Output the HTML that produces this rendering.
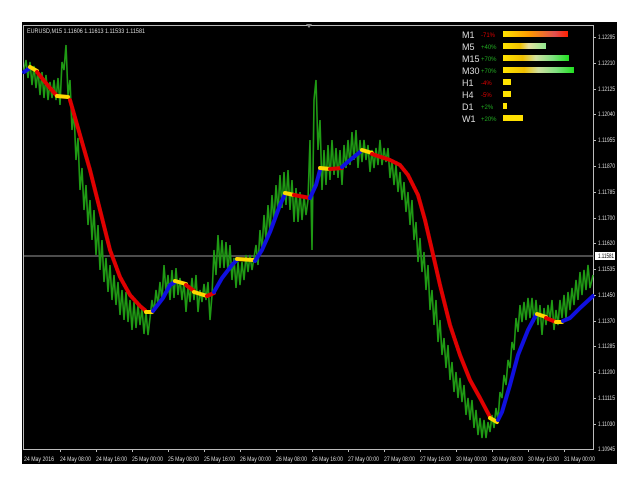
<!DOCTYPE html>
<html><head><meta charset="utf-8"><style>
html,body{margin:0;padding:0;background:#fff;width:640px;height:495px;overflow:hidden}
svg{position:absolute;left:0;top:0}
text{font-family:"Liberation Sans",sans-serif}
</style></head><body>
<svg width="640" height="495" viewBox="0 0 640 495">
<rect x="0" y="0" width="640" height="495" fill="#fff"/>
<rect x="22" y="22" width="595" height="442" fill="#000"/>
<rect x="23.5" y="25.5" width="570" height="424" fill="none" stroke="#bbb" stroke-width="1"/>
<polygon points="306,24 312,24 309,28" fill="#888"/>
<line x1="24" y1="256" x2="594" y2="256" stroke="#999" stroke-width="1"/>
<text x="27" y="33" fill="#ddd" font-size="6" textLength="118" lengthAdjust="spacingAndGlyphs">EURUSD,M15  1.11606 1.11613 1.11533 1.11581</text>
<!-- green price -->
<polyline fill="none" stroke="#1f9a14" stroke-width="1.6" stroke-linejoin="bevel" points="24,70 26,60 28,78 30,62 32,85 34,66 36,88 38,70 40,95 42,72 44,98 46,75 48,100 50,82 52,98 54,80 56,100 58,78 60,105 62,62 64,70 66,45 68,95 70,80 72,130 74,112 76,160 78,138 80,190 82,168 84,210 86,185 88,225 90,200 92,240 94,210 96,255 98,225 100,270 102,240 104,282 106,258 108,292 110,265 112,300 114,275 116,305 118,282 120,315 122,290 124,320 126,292 128,322 130,300 132,330 134,302 136,328 138,305 140,325 142,308 144,334 146,312 148,335 150,318 152,300 154,312 156,290 158,305 160,282 162,300 164,265 166,292 168,275 170,300 172,270 174,298 176,268 178,295 180,278 182,300 184,282 186,312 188,286 190,302 192,278 194,300 196,275 198,312 200,290 202,302 204,284 206,300 208,282 210,320 212,295 214,250 216,275 218,235 220,268 222,240 224,268 226,242 228,272 230,245 232,280 234,258 236,288 238,262 240,285 242,262 244,280 246,255 248,272 250,255 252,270 254,258 256,245 258,265 260,230 262,250 264,215 266,240 268,205 270,232 272,195 274,222 276,185 278,212 280,175 282,208 284,172 286,205 288,170 290,210 292,180 294,222 296,188 298,222 300,192 302,220 304,196 306,215 308,200 310,140 312,250 314,100 316,80 318,150 320,120 322,190 324,150 326,185 328,145 330,180 332,140 334,175 336,148 338,178 340,150 342,185 344,145 346,168 348,140 350,165 352,132 354,160 356,130 358,168 360,140 362,162 364,140 366,160 368,145 370,172 372,150 374,168 376,148 378,165 380,140 382,165 384,148 386,162 388,148 390,178 392,160 394,185 396,165 398,192 400,172 402,200 404,182 406,212 408,192 410,225 412,200 414,240 416,222 418,262 420,238 422,272 424,252 426,290 428,265 430,310 432,290 434,325 436,300 438,342 440,320 442,355 444,338 446,368 448,345 450,380 452,362 454,392 456,372 458,398 460,378 462,402 464,385 466,415 468,398 470,420 472,400 474,428 476,410 478,435 480,418 482,438 484,420 486,438 488,422 490,432 492,415 494,428 496,408 498,420 500,392 502,398 504,375 506,385 508,360 510,368 512,342 514,350 516,318 518,332 520,305 522,322 524,302 526,320 528,298 530,318 532,298 534,322 536,300 538,325 540,305 542,335 544,308 546,325 548,305 550,320 552,300 554,330 556,310 558,325 560,300 562,318 564,295 566,318 568,292 570,310 572,288 574,305 576,280 578,300 580,272 582,295 584,270 586,290 588,265 590,288 593,275"/>
<!-- MA segments -->
<g fill="none" stroke-width="4" stroke-linecap="round" stroke-linejoin="round">
<polyline stroke="#1010e0" points="24,72 30,68"/>
<polyline stroke="#ffd800" points="30,67 37,71"/>
<polyline stroke="#e00000" points="37,72 50,88 57,96"/>
<polyline stroke="#ffd800" points="57,96 68,97"/>
<polyline stroke="#e00000" stroke-dasharray="2 1.5" points="70,100 80,135 90,170 100,210 110,250 120,277 130,295 140,306 146,311"/>
<polyline stroke="#ffd800" points="146,312 152,312"/>
<polyline stroke="#1010e0" points="153,311 163,298 170,285 175,282"/>
<polyline stroke="#ffd800" points="175,281 186,284"/>
<polyline stroke="#e00000" points="186,285 194,291"/>
<polyline stroke="#ffd800" points="194,292 207,296"/>
<polyline stroke="#e00000" points="207,296 214,293"/>
<polyline stroke="#1010e0" points="214,292 222,278 232,265 237,260"/>
<polyline stroke="#ffd800" points="237,259 253,260"/>
<polyline stroke="#1010e0" points="255,261 262,250 270,232 280,205 285,194"/>
<polyline stroke="#ffd800" points="285,193 294,195"/>
<polyline stroke="#e00000" points="294,195 310,198"/>
<polyline stroke="#1010e0" points="310,198 316,185 320,170"/>
<polyline stroke="#ffd800" points="320,168 330,169"/>
<polyline stroke="#e00000" points="330,169 342,168"/>
<polyline stroke="#1010e0" points="342,167 350,160 360,152"/>
<polyline stroke="#ffd800" points="362,150 372,153"/>
<polyline stroke="#e00000" points="372,154 390,160"/>
<polyline stroke="#e00000" stroke-dasharray="2 1.5" points="392,161 400,165 408,175 418,195 425,220 432,250 440,285 450,325 460,355"/>
<polyline stroke="#e00000" points="460,355 470,380 480,398 490,417"/>
<polyline stroke="#ffd800" points="490,418 497,422"/>
<polyline stroke="#1010e0" points="498,420 502,412 510,385 518,355 528,330 536,315"/>
<polyline stroke="#ffd800" points="537,314 546,317"/>
<polyline stroke="#e00000" points="546,318 556,322"/>
<polyline stroke="#ffd800" points="556,322 562,322"/>
<polyline stroke="#1010e0" points="563,321 570,318 580,308 593,296"/>
</g>
<!-- panel -->
<g font-size="9" fill="#ddd">
<text x="462" y="38">M1</text><text x="462" y="50">M5</text><text x="462" y="62">M15</text><text x="462" y="74">M30</text>
<text x="462" y="86">H1</text><text x="462" y="98">H4</text><text x="462" y="110">D1</text><text x="462" y="122">W1</text>
</g>
<g font-size="6">
<text x="481" y="37" fill="#d00">-71%</text><text x="481" y="49" fill="#2a2">+40%</text>
<text x="481" y="61" fill="#2a2">+70%</text><text x="481" y="73" fill="#2a2">+70%</text>
<text x="481" y="85" fill="#d00">-4%</text><text x="481" y="97" fill="#d00">-5%</text>
<text x="481" y="109" fill="#2a2">+2%</text><text x="481" y="121" fill="#2a2">+20%</text>
</g>
<defs>
<linearGradient id="g1"><stop offset="0" stop-color="#ffe400"/><stop offset=".4" stop-color="#ff9a00"/><stop offset=".8" stop-color="#e05050"/><stop offset="1" stop-color="#ff2000"/></linearGradient>
<linearGradient id="g2"><stop offset="0" stop-color="#ffe400"/><stop offset=".4" stop-color="#f0c000"/><stop offset=".6" stop-color="#e8e0a0"/><stop offset="1" stop-color="#90e890"/></linearGradient>
<linearGradient id="g3"><stop offset="0" stop-color="#ffe400"/><stop offset=".3" stop-color="#f0c000"/><stop offset=".5" stop-color="#d0e0a0"/><stop offset=".75" stop-color="#80e080"/><stop offset="1" stop-color="#20e020"/></linearGradient>
</defs>
<rect x="503" y="31" width="65" height="6" fill="url(#g1)"/>
<rect x="503" y="43" width="43" height="6" fill="url(#g2)"/>
<rect x="503" y="55" width="66" height="6" fill="url(#g3)"/>
<rect x="503" y="67" width="71" height="6" fill="url(#g3)"/>
<rect x="503" y="79" width="8" height="6" fill="#ffe400"/>
<rect x="503" y="91" width="8" height="6" fill="#ffe400"/>
<rect x="503" y="103" width="4" height="6" fill="#ffe400"/>
<rect x="503" y="115" width="20" height="6" fill="#ffe000"/>
<!-- price axis -->
<g font-size="6" fill="#ddd">
<text x="598" y="39" textLength="17" lengthAdjust="spacingAndGlyphs">1.12295</text><text x="598" y="65" textLength="17" lengthAdjust="spacingAndGlyphs">1.12210</text><text x="598" y="91" textLength="17" lengthAdjust="spacingAndGlyphs">1.12125</text><text x="598" y="116" textLength="17" lengthAdjust="spacingAndGlyphs">1.12040</text>
<text x="598" y="142" textLength="17" lengthAdjust="spacingAndGlyphs">1.11955</text><text x="598" y="168" textLength="17" lengthAdjust="spacingAndGlyphs">1.11870</text><text x="598" y="194" textLength="17" lengthAdjust="spacingAndGlyphs">1.11785</text><text x="598" y="220" textLength="17" lengthAdjust="spacingAndGlyphs">1.11700</text>
<text x="598" y="245" textLength="17" lengthAdjust="spacingAndGlyphs">1.11620</text><text x="598" y="271" textLength="17" lengthAdjust="spacingAndGlyphs">1.11535</text><text x="598" y="297" textLength="17" lengthAdjust="spacingAndGlyphs">1.11450</text><text x="598" y="323" textLength="17" lengthAdjust="spacingAndGlyphs">1.11370</text>
<text x="598" y="348" textLength="17" lengthAdjust="spacingAndGlyphs">1.11285</text><text x="598" y="374" textLength="17" lengthAdjust="spacingAndGlyphs">1.11200</text><text x="598" y="400" textLength="17" lengthAdjust="spacingAndGlyphs">1.11115</text><text x="598" y="426" textLength="17" lengthAdjust="spacingAndGlyphs">1.11030</text>
<text x="598" y="451" textLength="17" lengthAdjust="spacingAndGlyphs">1.10945</text>
</g>
<g stroke="#bbb" stroke-width="1">
<line x1="594" y1="37.5" x2="596" y2="37.5"/><line x1="594" y1="63.5" x2="596" y2="63.5"/><line x1="594" y1="89.5" x2="596" y2="89.5"/><line x1="594" y1="114.5" x2="596" y2="114.5"/><line x1="594" y1="140.5" x2="596" y2="140.5"/><line x1="594" y1="166.5" x2="596" y2="166.5"/><line x1="594" y1="192.5" x2="596" y2="192.5"/><line x1="594" y1="218.5" x2="596" y2="218.5"/><line x1="594" y1="243.5" x2="596" y2="243.5"/><line x1="594" y1="269.5" x2="596" y2="269.5"/><line x1="594" y1="295.5" x2="596" y2="295.5"/><line x1="594" y1="321.5" x2="596" y2="321.5"/><line x1="594" y1="346.5" x2="596" y2="346.5"/><line x1="594" y1="372.5" x2="596" y2="372.5"/><line x1="594" y1="398.5" x2="596" y2="398.5"/><line x1="594" y1="424.5" x2="596" y2="424.5"/>
</g>
<rect x="595" y="252" width="20" height="8" fill="#fff"/>
<text x="598" y="258" font-size="6" fill="#000" textLength="16" lengthAdjust="spacingAndGlyphs">1.11581</text>
<!-- time axis -->
<g font-size="6" fill="#ddd">
<text x="24" y="461" textLength="30" lengthAdjust="spacingAndGlyphs">24 May 2016</text><text x="60" y="461" textLength="31" lengthAdjust="spacingAndGlyphs">24 May 08:00</text><text x="96" y="461" textLength="31" lengthAdjust="spacingAndGlyphs">24 May 16:00</text><text x="132" y="461" textLength="31" lengthAdjust="spacingAndGlyphs">25 May 00:00</text>
<text x="168" y="461" textLength="31" lengthAdjust="spacingAndGlyphs">25 May 08:00</text><text x="204" y="461" textLength="31" lengthAdjust="spacingAndGlyphs">25 May 16:00</text><text x="240" y="461" textLength="31" lengthAdjust="spacingAndGlyphs">26 May 00:00</text><text x="276" y="461" textLength="31" lengthAdjust="spacingAndGlyphs">26 May 08:00</text>
<text x="312" y="461" textLength="31" lengthAdjust="spacingAndGlyphs">26 May 16:00</text><text x="348" y="461" textLength="31" lengthAdjust="spacingAndGlyphs">27 May 00:00</text><text x="384" y="461" textLength="31" lengthAdjust="spacingAndGlyphs">27 May 08:00</text><text x="420" y="461" textLength="31" lengthAdjust="spacingAndGlyphs">27 May 16:00</text>
<text x="456" y="461" textLength="31" lengthAdjust="spacingAndGlyphs">30 May 00:00</text><text x="492" y="461" textLength="31" lengthAdjust="spacingAndGlyphs">30 May 08:00</text><text x="528" y="461" textLength="31" lengthAdjust="spacingAndGlyphs">30 May 16:00</text><text x="564" y="461" textLength="31" lengthAdjust="spacingAndGlyphs">31 May 00:00</text>
</g>
<g stroke="#bbb" stroke-width="1">
<line x1="60.5" y1="449" x2="60.5" y2="452"/><line x1="96.5" y1="449" x2="96.5" y2="452"/><line x1="132.5" y1="449" x2="132.5" y2="452"/><line x1="168.5" y1="449" x2="168.5" y2="452"/><line x1="204.5" y1="449" x2="204.5" y2="452"/><line x1="240.5" y1="449" x2="240.5" y2="452"/><line x1="276.5" y1="449" x2="276.5" y2="452"/><line x1="312.5" y1="449" x2="312.5" y2="452"/><line x1="348.5" y1="449" x2="348.5" y2="452"/><line x1="384.5" y1="449" x2="384.5" y2="452"/><line x1="420.5" y1="449" x2="420.5" y2="452"/><line x1="456.5" y1="449" x2="456.5" y2="452"/><line x1="492.5" y1="449" x2="492.5" y2="452"/><line x1="528.5" y1="449" x2="528.5" y2="452"/><line x1="564.5" y1="449" x2="564.5" y2="452"/>
</g>
</svg>
</body></html>
